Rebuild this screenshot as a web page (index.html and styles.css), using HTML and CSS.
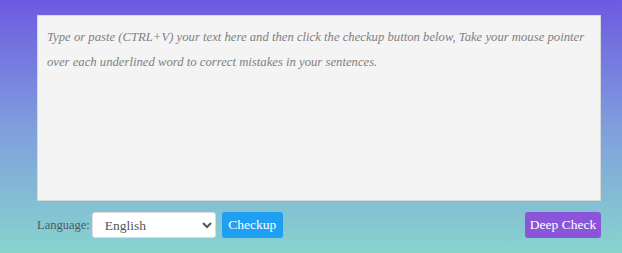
FILE: index.html
```html
<!DOCTYPE html>
<html>
<head>
  <title>Grammar Checkup</title>
  <link rel="stylesheet" href="styles.css">
</head>
<body>
  <div class="checker">
    <textarea class="editor" placeholder="Type or paste (CTRL+V) your text here and then click the checkup button below, Take your mouse pointer over each underlined word to correct mistakes in your sentences."></textarea>

    <div class="controls">
      <label class="lang-label" for="lang">Language:</label>
      <select id="lang" class="lang-select">
        <option>English</option>
        <option>French</option>
        <option>German</option>
        <option>Spanish</option>
      </select>
      <button class="btn btn-checkup">Checkup</button>
      <button class="btn btn-deep">Deep Check</button>
    </div>
  </div>
</body>
</html>
```

FILE: styles.css
```css
html, body {
  height: 100%;
}

body {
  margin: 0;
  padding: 0;
  background: linear-gradient(to bottom, #6d5ae0 0%, #7f9edc 50%, #87d4ce 100%);
  font-family: "Liberation Serif", "DejaVu Serif", serif;
  color: #555;
}

.checker {
  padding: 15px 21px 0 37px;
}

.editor {
  display: block;
  box-sizing: border-box;
  width: 564px;
  height: 186px;
  margin: 0;
  padding: 9px 9px;
  border: 1px solid #d8d8d8;
  background-color: #f4f4f4;
  font-family: "Liberation Serif", "DejaVu Serif", serif;
  font-style: italic;
  font-size: 12.7px;
  line-height: 25px;
  color: #333;
  resize: none;
  overflow-y: scroll;
}

.editor::placeholder {
  color: #808080;
}

.controls {
  display: flex;
  align-items: center;
  margin-top: 11px;
  height: 26px;
}

.lang-label {
  flex-shrink: 0;
  margin-right: 2px;
  font-size: 12.5px;
  color: #4f5a66;
}

.lang-select {
  box-sizing: border-box;
  width: 124px;
  height: 26px;
  padding: 0 6px 0 8px;
  border: 1px solid #ddd;
  border-radius: 3px;
  background-color: #fff;
  font-family: "Liberation Serif", "DejaVu Serif", serif;
  font-size: 13.5px;
  color: #555;
}

.btn {
  box-sizing: border-box;
  height: 26px;
  border: none;
  border-radius: 3px;
  color: #fff;
  font-family: "Liberation Serif", "DejaVu Serif", serif;
  font-size: 13.5px;
  cursor: pointer;
}

.btn-checkup {
  margin-left: 6px;
  width: 61px;
  padding: 0;
  background-color: #1e9ff2;
}

.btn-deep {
  margin-left: auto;
  width: 76px;
  padding: 0;
  background-color: #8a55d9;
}
```
